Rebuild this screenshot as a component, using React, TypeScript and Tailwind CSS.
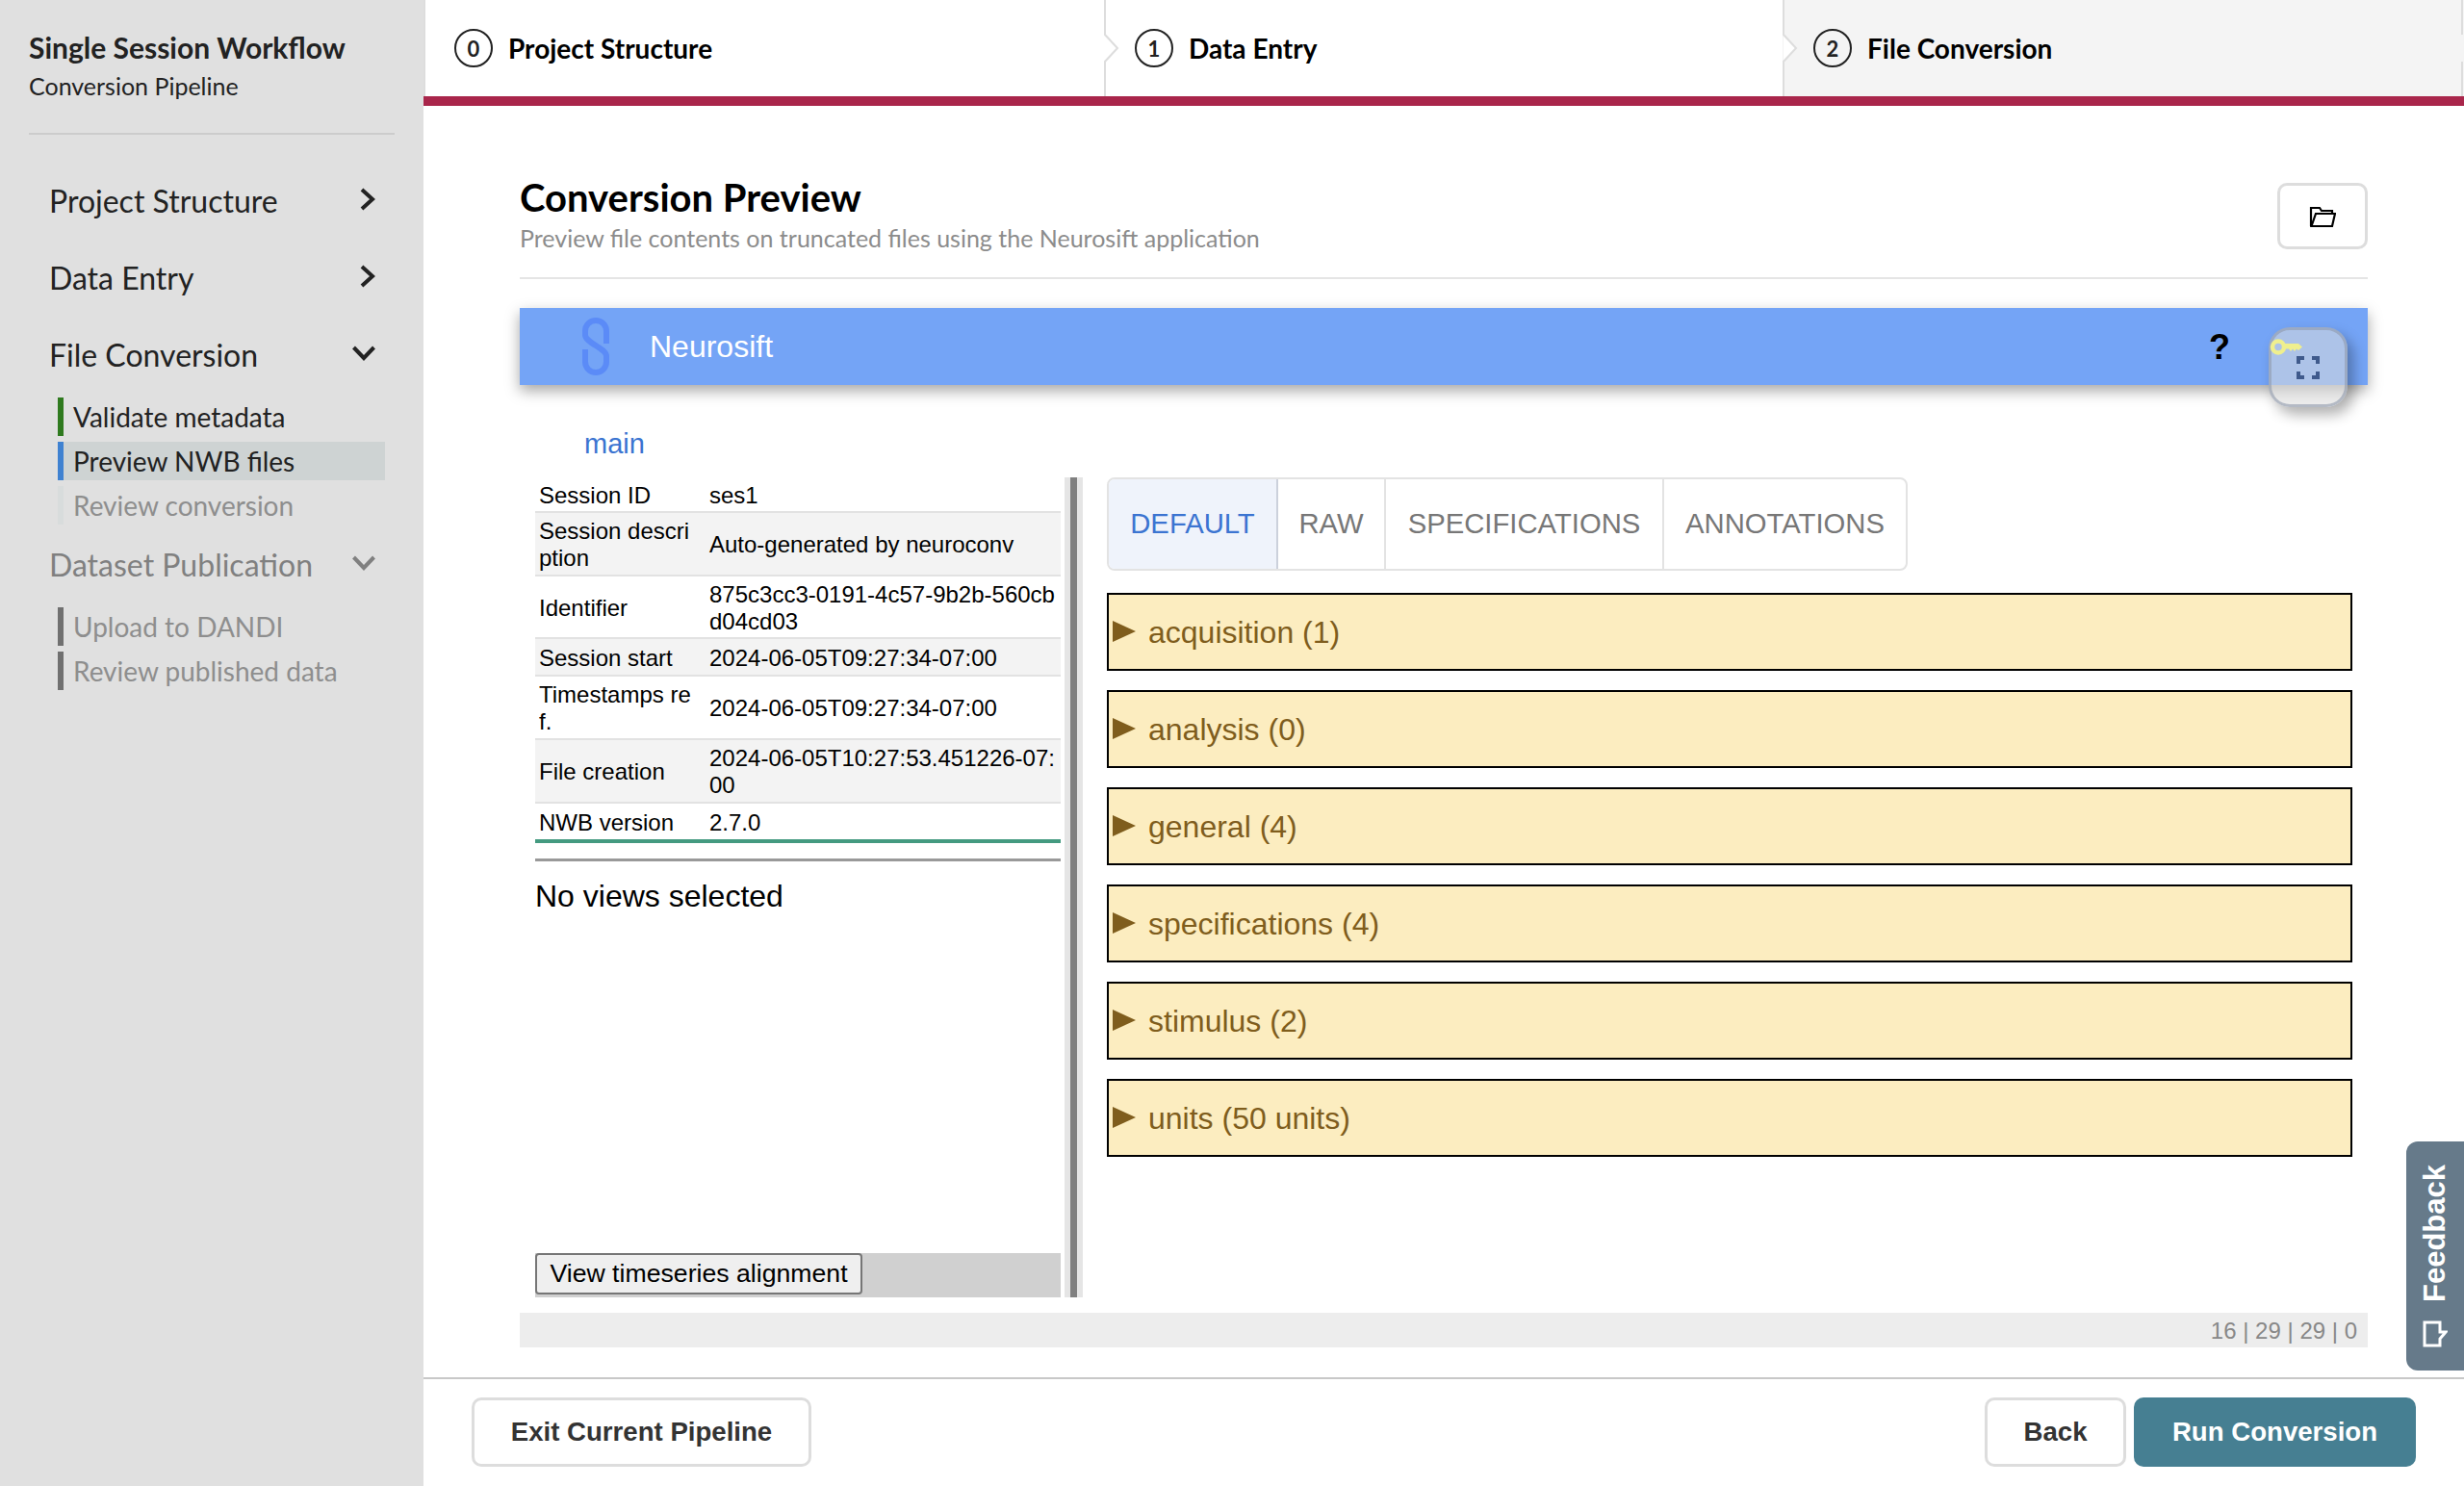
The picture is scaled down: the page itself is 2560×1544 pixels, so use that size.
const lato = "font-['Lato',sans-serif]";

const RightChevron = () => (
  <svg width="16" height="24" viewBox="0 0 16 24" fill="none" stroke="currentColor" strokeWidth="4">
    <polyline points="2,2 13,12 2,22" />
  </svg>
);

const DownChevron = () => (
  <svg width="24" height="17" viewBox="0 0 24 17" fill="none" stroke="currentColor" strokeWidth="4">
    <polyline points="1.5,2 12,13 22.5,2" />
  </svg>
);

const NavRow = ({ label, open, muted }: { label: string; open?: boolean; muted?: boolean }) => (
  <div className={`h-[80px] flex items-center justify-between pl-[51px] pr-[50px] text-[32px] ${muted ? "text-[#808080]" : "text-[#222222]"}`}>
    <span className="mt-[3px]">{label}</span>
    {open ? <DownChevron /> : <RightChevron />}
  </div>
);

const SubItem = ({ label, bar, active, muted }: { label: string; bar: string; active?: boolean; muted?: boolean }) => (
  <div className={`ml-[60px] w-[340px] h-[40px] flex items-center border-l-[6px] pl-[10px] text-[28px] ${bar} ${active ? "bg-[#ced3d3]" : ""} ${muted ? "text-[#8e8e8e]" : "text-[#222222]"}`}>
    {label}
  </div>
);

const Sidebar = () => (
  <aside className={`w-[440px] h-full shrink-0 bg-[#e0e0e0] ${lato}`}>
    <div className="mx-[30px] h-[140px] border-b-2 border-[#cccccc] pt-[29px]">
      <div className="text-[30px] leading-[40px] font-bold text-[#222222]">Single Session Workflow</div>
      <div className="mt-[2px] text-[25px] leading-[36px] text-[#222222]">Conversion Pipeline</div>
    </div>
    <div className="pt-[27px]">
      <NavRow label="Project Structure" />
      <NavRow label="Data Entry" />
      <NavRow label="File Conversion" open />
      <div className="mt-[6px] flex flex-col gap-[6px]">
        <SubItem label="Validate metadata" bar="border-[#2f7a1f]" />
        <SubItem label="Preview NWB files" bar="border-[#3f82d1]" active />
        <SubItem label="Review conversion" bar="border-[#d8dcdc]" muted />
      </div>
      <NavRow label="Dataset Publication" open muted />
      <div className="mt-[6px] flex flex-col gap-[6px]">
        <SubItem label="Upload to DANDI" bar="border-[#707070]" muted />
        <SubItem label="Review published data" bar="border-[#707070]" muted />
      </div>
    </div>
  </aside>
);

const Step = ({ n, label, width, current }: { n: number; label: string; width: string; current?: boolean }) => (
  <div className={`relative h-full flex items-center ${width} ${current ? "bg-[#f4f4f4]" : "bg-white"}`}>
    {n > 0 && (
      <svg width="16" height="100" viewBox="0 0 16 100" className="absolute left-0 top-0">
        <polyline points="1,0 1,36 14,50 1,64 1,100" fill="#ffffff" stroke="#dddddd" strokeWidth="2" />
      </svg>
    )}
    {n === 0 && <div className="absolute left-0 top-0 w-[2px] h-full bg-[#dddddd]" />}
    {current && (
      <svg width="4" height="100" viewBox="0 0 4 100" className="absolute right-0 top-0">
        <path d="M2 0 V36 M2 64 V100" stroke="#dddddd" strokeWidth="2" />
      </svg>
    )}
    <div className="ml-[32px] w-[40px] h-[40px] rounded-full border-2 border-[#222222] flex items-center justify-center text-[22px] font-bold text-[#222222]">{n}</div>
    <span className="ml-[16px] text-[28px] font-bold text-black">{label}</span>
  </div>
);

const Stepper = () => (
  <div className={`h-[110px] shrink-0 border-b-[10px] border-[#a9264b] flex ${lato}`}>
    <Step n={0} label="Project Structure" width="w-[707px]" />
    <Step n={1} label="Data Entry" width="w-[705px]" />
    <Step n={2} label="File Conversion" width="flex-1" current />
  </div>
);

const rows: [string, string, number][] = [
  ["Session ID", "ses1", 37],
  ["Session description", "Auto-generated by neuroconv", 66],
  ["Identifier", "875c3cc3-0191-4c57-9b2b-560cbd04cd03", 65],
  ["Session start", "2024-06-05T09:27:34-07:00", 39],
  ["Timestamps ref.", "2024-06-05T09:27:34-07:00", 66],
  ["File creation", "2024-06-05T10:27:53.451226-07:00", 66],
  ["NWB version", "2.7.0", 37],
];

const SessionTable = () => (
  <div className="border-b-4 border-[#449a80]">
    {rows.map(([k, v, h], i) => (
      <div
        key={k}
        style={{ height: h }}
        className={`flex items-center pt-[2px] text-[24px] leading-[28px] text-black ${i < rows.length - 1 ? "border-b-2 border-[#e2e2e2]" : ""} ${i % 2 === 1 ? "bg-[#f3f3f3]" : ""}`}
      >
        <div className="w-[181px] shrink-0 pl-[4px] pr-[15px] break-all">{k}</div>
        <div className="flex-1 break-all pr-[2px]">{v}</div>
      </div>
    ))}
  </div>
);

const Tabs = () => (
  <div className="w-[832px] h-[97px] flex border-2 border-[#e3e3e3] rounded-[8px] overflow-hidden text-[29.25px] text-[#777777]">
    <div className="w-[176px] bg-[#eff3fb] border-r-2 border-[#ccd1dc] flex items-center justify-center text-[#3b74d1]">DEFAULT</div>
    <div className="w-[112px] border-r-2 border-[#e3e3e3] flex items-center justify-center">RAW</div>
    <div className="w-[289px] border-r-2 border-[#e3e3e3] flex items-center justify-center">SPECIFICATIONS</div>
    <div className="flex-1 flex items-center justify-center">ANNOTATIONS</div>
  </div>
);

const sections = ["acquisition (1)", "analysis (0)", "general (4)", "specifications (4)", "stimulus (2)", "units (50 units)"];

const Neurosift = () => (
  <div className="relative h-[80px] bg-[#74a4f6] flex items-center shadow-[0_6px_14px_rgba(0,0,0,0.35)]">
    <svg width="28" height="60" viewBox="0 0 28 60" fill="none" stroke="#5b8bf7" strokeWidth="6" className="ml-[65px]">
      <path d="M25 27 V14 a11 11 0 0 0 -22 0 V18 C3 26 25 32 25 40 V46 a11 11 0 0 1 -22 0 V33" />
    </svg>
    <span className="ml-[42px] text-[32px] text-white">Neurosift</span>
    <span className="absolute left-[1755px] top-[17px] text-[36px] leading-[48px] font-bold text-black">?</span>
    <div className="absolute left-[1817px] top-[20px] w-[82px] h-[83px] rounded-[22px] border-[3px] border-[#8f9aab]/60 bg-[#dddddd]/55 shadow-[6px_8px_14px_rgba(0,0,0,0.3)]">
      <svg width="34" height="20" viewBox="0 0 34 20" className="absolute left-[-2px] top-[7px]">
        <circle cx="9" cy="10.5" r="6" fill="none" stroke="#efef8e" strokeWidth="4.5" />
        <path d="M14 7 H30 L34 10.5 L30 14 L28 12.5 L26 15 L24 12.5 L22 15 L20 12.5 H14 Z" fill="#efef8e" />
      </svg>
      <svg width="24" height="24" viewBox="0 0 24 24" fill="none" stroke="#3f5a8c" strokeWidth="4" className="absolute left-[26px] top-[27px]">
        <path d="M2 8 V2 H8 M16 2 H22 V8 M2 16 V22 H8 M16 22 H22 V16" />
      </svg>
    </div>
  </div>
);

const Preview = () => (
  <div className="h-[852px] flex">
    <div className="w-[566px] shrink-0 pl-[16px] flex flex-col">
      <div className="h-[398px] w-[546px]">
        <SessionTable />
        <div className="mt-[16px] border-t-[3px] border-[#999999]" />
        <div className="mt-[17px] text-[32px] leading-[38px] text-black">No views selected</div>
      </div>
      <div className="mt-auto w-[546px] h-[46px] bg-[#d0d0d0]">
        <button className="w-[340px] h-[43px] pb-[2px] bg-[#efefef] border-2 border-[#767676] rounded-[4px] text-[26.67px] leading-[30px] text-black">View timeseries alignment</button>
      </div>
    </div>
    <div className="w-[19px] shrink-0 bg-[#e5e5e5] px-[6px] mr-[25px]">
      <div className="h-full bg-[#808080]" />
    </div>
    <div className="flex-1">
      <Tabs />
      <div className="mt-[23px] w-[1294px] flex flex-col gap-[20px]">
        {sections.map((s) => (
          <div key={s} className="h-[81px] bg-[#fcedc0] border-2 border-black flex items-center text-[32px] text-[#7f5d1d]">
            <svg width="24" height="22" viewBox="0 0 24 22" className="ml-[4px] mb-[2px]">
              <polygon points="0,0 24,11 0,22" fill="#7f5d1d" />
            </svg>
            <span className="ml-[13px]">{s}</span>
          </div>
        ))}
      </div>
    </div>
  </div>
);

const Footer = () => (
  <div className="h-[113px] border-t-2 border-[#c8c8c8] flex items-start justify-between px-[50px] pt-[19px] text-[27.6px] font-bold">
    <button className="w-[353px] h-[72px] rounded-[10px] border-[3px] border-[#dddddd] text-[#333333]">Exit Current Pipeline</button>
    <div className="flex gap-[8px]">
      <button className="w-[147px] h-[72px] rounded-[10px] border-[3px] border-[#dddddd] text-[#333333]">Back</button>
      <button className="w-[293px] h-[72px] rounded-[10px] bg-[#467f92] text-white">Run Conversion</button>
    </div>
  </div>
);

const FeedbackTab = () => (
  <div className="absolute right-0 top-[1186px] w-[60px] h-[238px] bg-[#667a8a] rounded-l-[12px] flex flex-col items-center pt-[24px] text-white">
    <span className="[writing-mode:vertical-rl] rotate-180 text-[31px] leading-[36px] font-bold">Feedback</span>
    <svg width="26" height="28" viewBox="0 0 26 28" fill="none" stroke="#ffffff" strokeWidth="3" className="mt-[19px]">
      <path d="M2 2 H18 V12 H24 L18 19 V26 H2 Z" />
    </svg>
  </div>
);

export default function App() {
  return (
    <div className="relative w-[2560px] h-[1544px] flex overflow-hidden bg-white font-['Liberation_Sans',sans-serif]">
      <Sidebar />
      <main className="flex-1 flex flex-col min-w-0">
        <Stepper />
        <div className="flex-1 px-[100px] pt-[70px]">
          <div className="h-[110px] border-b-2 border-[#e5e5e5] flex justify-between items-start">
            <div className={lato}>
              <div className="text-[40px] leading-[50px] font-bold text-black">Conversion Preview</div>
              <div className="text-[25px] leading-[34px] text-[#8c8c8c]">Preview file contents on truncated files using the Neurosift application</div>
            </div>
            <button className="mt-[10px] w-[94px] h-[69px] border-[3px] border-[#dddddd] rounded-[10px] flex items-center justify-center">
              <svg width="28" height="24" viewBox="0 0 28 24" fill="none" stroke="#000000" strokeWidth="2.2">
                <path d="M4 21 H2 V3 H11 L13 6 H24 V9" />
                <path d="M7 9 H27 L24 22 H2.5 Z" />
              </svg>
            </button>
          </div>
          <div className="mt-[30px]"><Neurosift /></div>
          <div className="h-[96px] pl-[67px] pt-[44px] text-[29px] leading-[34px] text-[#3b74d1]">main</div>
          <Preview />
          <div className="mt-[16px] h-[36px] pt-[2px] bg-[#ededed] flex items-center justify-end pr-[11px] text-[24px] text-[#888888]">16 | 29 | 29 | 0</div>
        </div>
        <Footer />
      </main>
      <FeedbackTab />
    </div>
  );
}
